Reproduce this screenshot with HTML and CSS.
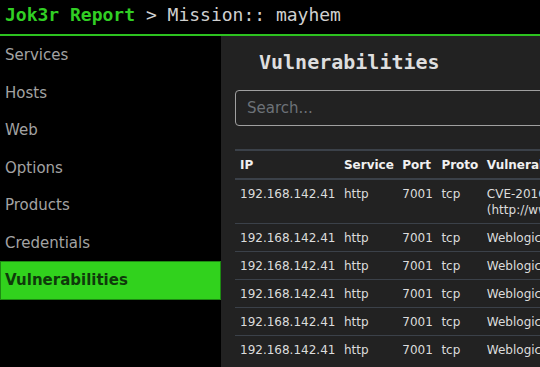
FILE: index.html
```html
<!DOCTYPE html>
<html lang="en">
<head>
    <meta charset="UTF-8">
    <meta name="viewport" content="width=device-width, initial-scale=1.0">
    <title>Jok3r Report - mayhem</title>
    <link rel="stylesheet" href="styles.css">
</head>
<body>
    <div class="topbar">
        <span class="brand">Jok3r Report</span> &gt; Mission:: mayhem
    </div>

    <div class="layout">
        <div class="sidebar">
            <a class="nav-item" href="#">Services</a>
            <a class="nav-item" href="#">Hosts</a>
            <a class="nav-item" href="#">Web</a>
            <a class="nav-item" href="#">Options</a>
            <a class="nav-item" href="#">Products</a>
            <a class="nav-item" href="#">Credentials</a>
            <a class="nav-item active" href="#">Vulnerabilities</a>
        </div>

        <div class="main">
            <div class="content">
                <h2>Vulnerabilities</h2>
                <input class="search" type="text" placeholder="Search...">
                <table>
                    <thead>
                        <tr>
                            <th>IP</th>
                            <th>Service</th>
                            <th>Port</th>
                            <th>Proto</th>
                            <th class="wide">Vulnerability</th>
                        </tr>
                    </thead>
                    <tbody>
                        <tr>
                            <td>192.168.142.41</td>
                            <td>http</td>
                            <td>7001</td>
                            <td>tcp</td>
                            <td class="wide">CVE-2016-3510<br><span class="url">(http://www.oracle.com/technetwork/security-advisory/cpujul2016-2881720.html)</span></td>
                        </tr>
                        <tr>
                            <td>192.168.142.41</td>
                            <td>http</td>
                            <td>7001</td>
                            <td>tcp</td>
                            <td class="wide">Weblogic CVE-2017-10271 RCE</td>
                        </tr>
                        <tr>
                            <td>192.168.142.41</td>
                            <td>http</td>
                            <td>7001</td>
                            <td>tcp</td>
                            <td class="wide">Weblogic CVE-2018-2628 RCE</td>
                        </tr>
                        <tr>
                            <td>192.168.142.41</td>
                            <td>http</td>
                            <td>7001</td>
                            <td>tcp</td>
                            <td class="wide">Weblogic CVE-2018-2893 RCE</td>
                        </tr>
                        <tr>
                            <td>192.168.142.41</td>
                            <td>http</td>
                            <td>7001</td>
                            <td>tcp</td>
                            <td class="wide">Weblogic CVE-2018-2894 RCE</td>
                        </tr>
                        <tr>
                            <td>192.168.142.41</td>
                            <td>http</td>
                            <td>7001</td>
                            <td>tcp</td>
                            <td class="wide">Weblogic CVE-2019-2725 RCE</td>
                        </tr>
                    </tbody>
                </table>
            </div>
        </div>
    </div>
</body>
</html>
```

FILE: styles.css
```css
html, body {
    height: 100%;
}

body {
    margin: 0;
    padding: 0;
    background: #000;
    font-family: 'DejaVu Sans', sans-serif;
    display: flex;
    flex-direction: column;
    overflow: hidden;
}

.topbar {
    background: #000;
    color: #d0d0d0;
    font-family: 'DejaVu Sans Mono', monospace;
    font-size: 18px;
    line-height: 22px;
    padding: 4px 5px 8px 5px;
    border-bottom: 2px solid #2cc21f;
    white-space: nowrap;
}
.brand {
    color: #31cf24;
    font-weight: bold;
}

.layout {
    flex: 1;
    display: flex;
    min-height: 0;
}

.sidebar {
    width: 221px;
    flex-shrink: 0;
    background: #000;
    display: flex;
    flex-direction: column;
}
.nav-item {
    display: block;
    color: #a3a3a3;
    text-decoration: none;
    font-size: 15px;
    line-height: 17.5px;
    padding: 11px 5px 9px 5px;
}
.nav-item.active {
    background: #31d21d;
    color: #0f3a0b;
    font-weight: bold;
    padding: 10px 4px 9px 4px;
    border: 1px solid #1d8a12;
}

.main {
    flex: 1;
    background: #222;
    overflow: hidden;
}
.content {
    width: 900px;
    padding: 0 14px;
}

h2 {
    font-family: 'DejaVu Sans Mono', monospace;
    font-size: 20px;
    line-height: 24px;
    color: #dedede;
    margin: 14px 0 16px 24px;
}

.search {
    display: block;
    box-sizing: border-box;
    width: 100%;
    height: 36px;
    background: #222;
    border: 1px solid #a0a0a0;
    border-radius: 4px;
    padding: 0 11px;
    font-family: 'DejaVu Sans', sans-serif;
    font-size: 15px;
    color: #ddd;
}
.search::placeholder {
    color: #6d7278;
}

table {
    width: 100%;
    border-collapse: collapse;
    margin-top: 23px;
    font-size: 12px;
}
th, td {
    text-align: left;
    vertical-align: top;
    white-space: nowrap;
    padding: 6px 3.5px 5px 5px;
    line-height: 16px;
}
th {
    color: #f0f0f0;
    font-weight: bold;
    border-top: 2px solid #3b4149;
    border-bottom: 2px solid #3b4149;
}
td {
    color: #dcdcdc;
    border-top: 1px solid #3b4149;
}
.wide {
    width: 100%;
    white-space: normal;
}
.url {
    white-space: nowrap;
}
```
